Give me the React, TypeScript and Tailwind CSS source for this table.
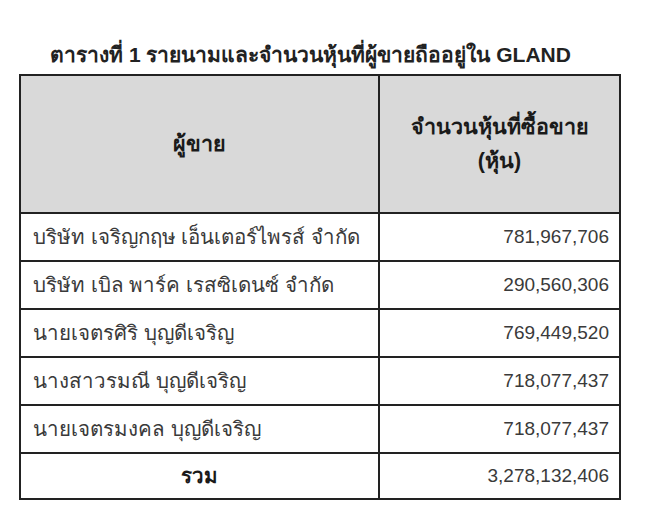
const rows: [string, string][] = [
  ["บริษัท เจริญกฤษ เอ็นเตอร์ไพรส์ จำกัด", "781,967,706"],
  ["บริษัท เบิล พาร์ค เรสซิเดนซ์ จำกัด", "290,560,306"],
  ["นายเจตรศิริ บุญดีเจริญ", "769,449,520"],
  ["นางสาวรมณี บุญดีเจริญ", "718,077,437"],
  ["นายเจตรมงคล บุญดีเจริญ", "718,077,437"],
];

export default function App() {
  return (
    <div className="h-[510px] w-[650px] bg-white font-['Liberation_Sans',sans-serif] text-[#3a3a3a]">
      <div className="w-[602px] pl-[19px] pt-[42px]">
        <h1 className="mb-[6px] h-[26px] text-center text-[21px] font-bold leading-[26px] text-[#222]">
          ตารางที่ 1 รายนามและจำนวนหุ้นที่ผู้ขายถืออยู่ใน GLAND
        </h1>
        <div className="w-[602px] border-2 border-[#222]">
          <div className="grid h-[136px] grid-cols-[359px_1fr] bg-[#d9d9d9] text-[21.5px] font-bold text-[#1a1a1a]">
            <div className="flex items-center justify-center border-r-2 border-[#222]">ผู้ขาย</div>
            <div className="flex flex-col items-center justify-center leading-[34px]">
              <span>จำนวนหุ้นที่ซื้อขาย</span>
              <span>(หุ้น)</span>
            </div>
          </div>
          {rows.map(([name, qty]) => (
            <div
              key={name}
              className="grid h-[48px] grid-cols-[359px_1fr] border-t-2 border-[#222]"
            >
              <div className="flex items-center border-r-2 border-[#222] pl-[12px] text-[20.5px]">{name}</div>
              <div className="flex items-center justify-end pr-[10px] text-[19px]">{qty}</div>
            </div>
          ))}
          <div className="grid h-[46px] grid-cols-[359px_1fr] border-t-2 border-[#222]">
            <div className="flex items-center justify-center border-r-2 border-[#222] text-[20.5px] font-bold text-[#1a1a1a]">
              รวม
            </div>
            <div className="flex items-center justify-end pr-[10px] text-[19px]">3,278,132,406</div>
          </div>
        </div>
      </div>
    </div>
  );
}
